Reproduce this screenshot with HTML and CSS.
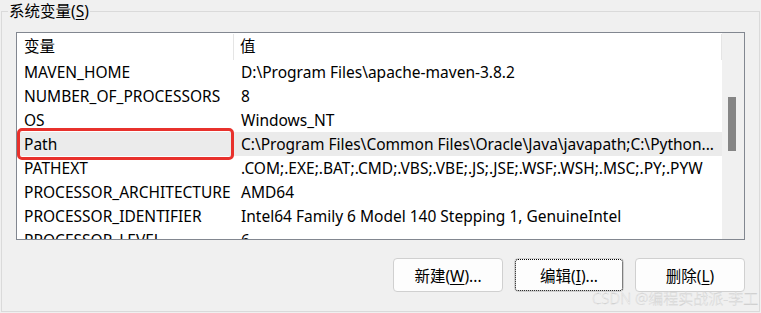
FILE: index.html
```html
<!DOCTYPE html>
<html lang="zh-CN">
<head>
    <meta charset="UTF-8">
    <meta name="viewport" content="width=device-width, initial-scale=1.0">
    <title>系统变量</title>
    <link rel="stylesheet" href="styles.css">
</head>
<body>
    <fieldset class="group">
        <legend class="group-title">系统变量(<u>S</u>)</legend>

        <div class="listview">
            <div class="list-body">
                <div class="list-head">
                    <div class="col-name">变量</div>
                    <div class="col-value">值</div>
                </div>
                <div class="row"><div class="col-name">MAVEN_HOME</div><div class="col-value">D:\Program Files\apache-maven-3.8.2</div></div>
                <div class="row"><div class="col-name">NUMBER_OF_PROCESSORS</div><div class="col-value">8</div></div>
                <div class="row"><div class="col-name">OS</div><div class="col-value">Windows_NT</div></div>
                <div class="row selected">
                    <div class="col-name">Path</div>
                    <div class="col-value">C:\Program Files\Common Files\Oracle\Java\javapath;C:\Python...</div>
                    <div class="mark"></div>
                </div>
                <div class="row"><div class="col-name">PATHEXT</div><div class="col-value">.COM;.EXE;.BAT;.CMD;.VBS;.VBE;.JS;.JSE;.WSF;.WSH;.MSC;.PY;.PYW</div></div>
                <div class="row"><div class="col-name">PROCESSOR_ARCHITECTURE</div><div class="col-value">AMD64</div></div>
                <div class="row"><div class="col-name">PROCESSOR_IDENTIFIER</div><div class="col-value">Intel64 Family 6 Model 140 Stepping 1, GenuineIntel</div></div>
                <div class="row"><div class="col-name">PROCESSOR_LEVEL</div><div class="col-value">6</div></div>
            </div>
            <div class="scrollbar">
                <div class="thumb"></div>
            </div>
        </div>

        <div class="actions">
            <button class="btn">新建(<u>W</u>)...</button>
            <button class="btn focused">编辑(<u>I</u>)...</button>
            <button class="btn">删除(<u>L</u>)</button>
        </div>
    </fieldset>

    <div class="watermark">CSDN @编程实战派-李工</div>
</body>
</html>
```

FILE: styles.css
```css
html, body {
    margin: 0;
    width: 761px;
    height: 313px;
    overflow: hidden;
}

body {
    background: #f0f0f0;
    font-family: "Noto Sans", "Noto Sans CJK SC", sans-serif;
    font-size: 15.5px;
    color: #000;
    position: relative;
}

.group {
    box-sizing: border-box;
    margin: 0 0 0 1px;
    width: 759px;
    height: 312px;
    border: 1px solid #dadada;
    border-radius: 0;
    padding: 10px 0 0 6px;
}

.group-title {
    padding: 0 1px;
    line-height: 22px;
}

u {
    text-decoration-thickness: 1px;
    text-underline-offset: 2px;
}

.listview {
    display: flex;
    margin-left: 8px;
    width: 729px;
    height: 208px;
    box-sizing: border-box;
    border: 1px solid #828790;
    background: #fff;
}

.list-body {
    width: 705px;
    overflow: hidden;
}

.list-head {
    display: flex;
    height: 27px;
}

.list-head .col-name {
    border-right: 1px solid #e5e5e5;
    margin-top: 1px;
    line-height: 25px;
}

.list-head .col-value {
    border-right: 1px solid #e5e5e5;
    margin-top: 1px;
    line-height: 25px;
}

.row {
    display: flex;
    height: 24px;
    line-height: 24px;
    position: relative;
}

.col-name {
    width: 217px;
    padding-left: 7px;
    box-sizing: border-box;
    white-space: nowrap;
    flex: none;
}

.col-value {
    flex: 1;
    padding-left: 6px;
    white-space: nowrap;
}

.row .col-name {
    margin-right: 1px;
}

.selected {
    background: #ebebeb;
}

.mark {
    position: absolute;
    left: 0;
    top: -4px;
    width: 217px;
    height: 32px;
    box-sizing: border-box;
    border: 3px solid #e8312c;
    border-radius: 5px;
}

.scrollbar {
    width: 22px;
    background: #f0f0f0;
}

.thumb {
    width: 8px;
    height: 54px;
    margin: 64px 0 0 6px;
    background: #858585;
}

.actions {
    display: flex;
    justify-content: flex-end;
    gap: 11px;
    margin: 18px 14px 0 0;
}

.btn {
    width: 110px;
    height: 34px;
    background: #fdfdfd;
    border: 1px solid #d0d0d0;
    border-radius: 4px;
    font-family: "Noto Sans", "Noto Sans CJK SC", sans-serif;
    font-size: 15.5px;
    color: #000;
    padding: 0;
}

.focused {
    outline: 1px dotted #000;
    outline-offset: -2px;
}

.watermark {
    position: absolute;
    left: 592px;
    top: 288px;
    font-size: 15px;
    font-weight: 300;
    line-height: 20px;
    white-space: nowrap;
    color: #f8f8f8;
    -webkit-text-stroke: 0.3px #cacaca;
}
```
